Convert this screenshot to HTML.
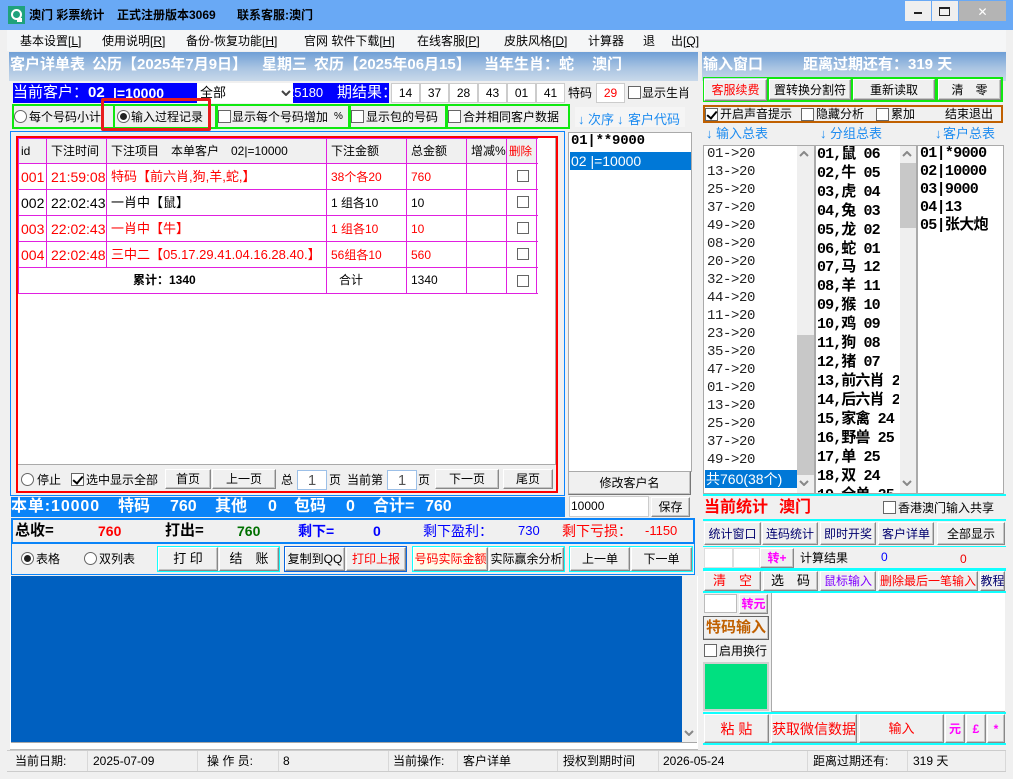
<!DOCTYPE html>
<html><head><meta charset="utf-8">
<style>
html,body{margin:0;padding:0}
body{width:1013px;height:779px;overflow:hidden;position:relative;background:#f0f0f0;font:12px/16px "Liberation Sans","Noto Sans CJK SC",sans-serif;color:#000}
div,span.a,svg{position:absolute;white-space:nowrap;box-sizing:border-box}
.t{height:16px;line-height:16px}
.b{background:#f0f0f0;border:1px solid;border-color:#fff #888 #888 #fff;box-shadow:inset -1px -1px 0 #c4c4c4;display:flex;align-items:center;justify-content:center}
.w{background:#fff;border:1px solid #aaa}
.cb{width:13px;height:13px;background:#fff;border:1px solid #666}
.r{width:13px;height:13px;background:#fff;border:1px solid #666;border-radius:50%}
.r.on:after{content:"";position:absolute;left:2px;top:2px;width:7px;height:7px;border-radius:50%;background:#222}
.cb.on:after{content:"";position:absolute;left:3px;top:0;width:4px;height:8px;border:solid #000;border-width:0 2px 2px 0;transform:rotate(40deg)}
.hd{background:linear-gradient(#6f9fd6,#a9c4e2 55%,#c9d9ea);color:#fff;font-weight:bold;font-size:15px;line-height:26px}
.g{border:2px solid #10e810}
.c{border:2px solid #1ff}
.l{font:14px/18px "Liberation Mono","Noto Sans CJK SC",monospace;left:707px;letter-spacing:-.4px;color:#222;margin-top:-1px}
.m{font:bold 15px/19px "Liberation Mono","Noto Sans CJK SC",monospace;left:817px;letter-spacing:-.9px;margin-top:1px}
.n{font:bold 15px/18px "Liberation Mono","Noto Sans CJK SC",monospace;left:920px;letter-spacing:-.7px;margin-top:1px}
.v{background:#e020e0}
.s{font-size:14px}
.wb{color:#fff;font-weight:bold;font-size:16px;line-height:20px;top:497px}
.st{font-size:14px;top:522px;height:18px;line-height:18px}
.blue{color:#1e8cf0;font-size:13px}
.nv{color:#00006e;font-size:12px}
.sep{width:1px;height:20px;top:751px;background:#d8d8d8}
polyline{fill:none;stroke:#888;stroke-width:2}
</style></head><body>

<!-- title bar -->
<div style="left:0;top:0;width:1013px;height:30px;background:#69a9f5"></div>
<div style="left:8px;top:6px;width:17px;height:18px;background:#1fa27c"></div>
<div style="left:11px;top:9px;width:11px;height:11px;border:2px solid #fff;border-radius:50%"></div>
<div style="left:17px;top:18px;width:5px;height:4px;background:#fff"></div>
<div class="t" style="left:29px;top:7px;font-weight:bold">澳门 彩票统计</div>
<div class="t" style="left:117px;top:7px;font-weight:bold">正式注册版本3069</div>
<div class="t" style="left:237px;top:7px;font-weight:bold">联系客服:澳门</div>
<div style="left:905px;top:1px;width:26px;height:20px;background:#efefef"></div>
<div style="left:914px;top:12px;width:8px;height:2px;background:#222"></div>
<div style="left:932px;top:1px;width:26px;height:20px;background:#efefef"></div>
<div style="left:939px;top:7px;width:11px;height:9px;border:1px solid #222;border-top-width:2px"></div>
<div style="left:959px;top:1px;width:47px;height:20px;background:#b4b4b4;color:#fff;text-align:center;font-size:12px;line-height:22px">✕</div>

<!-- menu -->
<div style="left:7px;top:30px;width:999px;height:21px;background:#f5f6f7"></div>
<div class="t" style="left:20px;top:33px">基本设置[<u>L</u>]</div>
<div class="t" style="left:102px;top:33px">使用说明[<u>R</u>]</div>
<div class="t" style="left:186px;top:33px">备份-恢复功能[<u>H</u>]</div>
<div class="t" style="left:304px;top:33px">官网 软件下载[<u>H</u>]</div>
<div class="t" style="left:417px;top:33px">在线客服[<u>P</u>]</div>
<div class="t" style="left:504px;top:33px">皮肤风格[<u>D</u>]</div>
<div class="t" style="left:588px;top:33px">计算器</div>
<div class="t" style="left:643px;top:33px">退</div>
<div class="t" style="left:671px;top:33px">出[<u>Q</u>]</div>

<!-- headers -->
<div class="hd" style="left:9px;top:52px;width:689px;height:29px"><span style="position:absolute;left:1px;top:0">客户详单表</span><span style="position:absolute;left:83px;top:0">公历【2025年7月9日】</span><span style="position:absolute;left:253px;top:0">星期三</span><span style="position:absolute;left:305px;top:0">农历【2025年06月15】</span><span style="position:absolute;left:475px;top:0">当年生肖：蛇</span><span style="position:absolute;left:583px;top:0">澳门</span></div>
<div class="hd" style="left:702px;top:52px;width:304px;height:29px"><span style="position:absolute;left:1px;top:0">输入窗口</span><span style="position:absolute;left:101px;top:0">距离过期还有：319 天</span></div>

<!-- row 1 -->
<div style="left:13px;top:83px;width:184px;height:20px;background:#00f;color:#fff;font-size:15px;line-height:20px"><span style="position:absolute;left:0;top:0">当前客户：</span><span style="position:absolute;left:75px;top:0;font-weight:bold">02</span><span style="position:absolute;left:100px;top:0;font-weight:bold;font-size:14px">|=10000</span></div>
<div style="left:197px;top:83px;width:96px;height:20px;background:#fff;font-size:13px;line-height:19px;padding-left:3px">全部</div>
<svg style="left:281px;top:90px" width="10" height="6"><polyline points="1,1 5,5 9,1" style="stroke:#444"/></svg>
<div style="left:293px;top:83px;width:96px;height:20px;background:#00f;color:#fff;font-size:13px;line-height:20px;overflow:hidden"><span style="position:absolute;left:-6px;top:0">25180</span><span style="position:absolute;left:44px;top:0;font-size:15px">期结果：</span></div>
<div class="w" style="left:391px;top:83px;width:29px;height:20px;border-color:#ccc;text-align:center;line-height:19px">14</div>
<div class="w" style="left:420px;top:83px;width:29px;height:20px;border-color:#ccc;text-align:center;line-height:19px">37</div>
<div class="w" style="left:449px;top:83px;width:29px;height:20px;border-color:#ccc;text-align:center;line-height:19px">28</div>
<div class="w" style="left:478px;top:83px;width:29px;height:20px;border-color:#ccc;text-align:center;line-height:19px">43</div>
<div class="w" style="left:507px;top:83px;width:29px;height:20px;border-color:#ccc;text-align:center;line-height:19px">01</div>
<div class="w" style="left:536px;top:83px;width:29px;height:20px;border-color:#ccc;text-align:center;line-height:19px">41</div>
<div class="t" style="left:568px;top:85px">特码</div>
<div class="w" style="left:596px;top:83px;width:29px;height:20px;border-color:#ccc;text-align:center;line-height:19px;color:#f00">29</div>
<div class="cb" style="left:628px;top:86px"></div>
<div class="t" style="left:642px;top:85px">显示生肖</div>

<!-- row 2 -->
<div class="g" style="left:12px;top:104px;width:102px;height:25px;border-right:0"></div>
<div class="g" style="left:113px;top:104px;width:104px;height:25px"></div>
<div class="g" style="left:216px;top:104px;width:134px;height:25px"></div>
<div class="g" style="left:349px;top:104px;width:98px;height:25px"></div>
<div class="g" style="left:446px;top:104px;width:124px;height:25px"></div>
<div class="r" style="left:14px;top:110px"></div><div class="t" style="left:29px;top:109px">每个号码小计</div>
<div class="r on" style="left:117px;top:110px"></div><div class="t" style="left:131px;top:109px">输入过程记录</div>
<div class="cb" style="left:218px;top:110px"></div><div class="t" style="left:232px;top:109px">显示每个号码增加</div><div class="t" style="left:334px;top:109px;font-size:10px">%</div>
<div class="cb" style="left:351px;top:110px"></div><div class="t" style="left:366px;top:109px">显示包的号码</div>
<div class="cb" style="left:448px;top:110px"></div><div class="t" style="left:463px;top:109px">合并相同客户数据</div>
<div style="left:101px;top:98px;width:110px;height:33px;border:3px solid #e81c1c;border-radius:2px"></div>

<div style="left:575px;top:107px;width:110px;height:20px;background:#f5f5f5"></div>
<div class="t blue" style="left:578px;top:112px">↓</div><div class="t blue" style="left:588px;top:112px">次序</div><div class="t blue" style="left:617px;top:112px">↓</div><div class="t blue" style="left:628px;top:112px">客户代码</div>

<!-- main frames -->
<div style="left:10px;top:131px;width:555px;height:365px;border:1px solid #0a84ff;background:#f0f0f0"></div>
<div style="left:16px;top:136px;width:542px;height:357px;border:2px solid #f00;background:#f0f0f0"></div>
<div style="left:18px;top:138px;width:538px;height:327px;background:#fff;border-right:1px solid #aaa;border-bottom:1px solid #aaa"></div>

<!-- table -->
<div style="left:18px;top:138px;width:519px;height:25px;background:#f0f0f0"></div>
<div class="v" style="left:18px;top:138px;width:520px;height:1px"></div>
<div class="v" style="left:18px;top:163px;width:520px;height:1px"></div>
<div class="v" style="left:18px;top:189px;width:520px;height:1px"></div>
<div class="v" style="left:18px;top:215px;width:520px;height:1px"></div>
<div class="v" style="left:18px;top:241px;width:520px;height:1px"></div>
<div class="v" style="left:18px;top:267px;width:520px;height:1px"></div>
<div class="v" style="left:18px;top:293px;width:520px;height:1px"></div>
<div class="v" style="left:18px;top:138px;width:1px;height:156px"></div>
<div class="v" style="left:46px;top:138px;width:1px;height:129px"></div>
<div class="v" style="left:106px;top:138px;width:1px;height:129px"></div>
<div class="v" style="left:326px;top:138px;width:1px;height:156px"></div>
<div class="v" style="left:406px;top:138px;width:1px;height:156px"></div>
<div class="v" style="left:466px;top:138px;width:1px;height:156px"></div>
<div class="v" style="left:506px;top:138px;width:1px;height:156px"></div>
<div class="v" style="left:536px;top:138px;width:1px;height:156px"></div>

<div class="t" style="left:21px;top:143px">id</div>
<div class="t" style="left:51px;top:143px">下注时间</div>
<div class="t" style="left:111px;top:143px">下注项目</div>
<div class="t" style="left:171px;top:143px">本单客户</div>
<div class="t" style="left:231px;top:143px">02|=10000</div>
<div class="t" style="left:331px;top:143px">下注金额</div>
<div class="t" style="left:411px;top:143px">总金额</div>
<div class="t" style="left:471px;top:143px">增减%</div>
<div class="t" style="left:509px;top:144px;color:#f00;font-size:11.5px">删除</div>

<div class="t s" style="left:21px;top:169px;color:#f00">001</div>
<div class="t s" style="left:51px;top:169px;color:#f00">21:59:08</div>
<div class="t" style="left:111px;top:169px;color:#f00;font-size:13px">特码【前六肖,狗,羊,蛇,】</div>
<div class="t" style="left:331px;top:169px;color:#f00">38个各20</div>
<div class="t" style="left:411px;top:169px;color:#f00">760</div>
<div class="t s" style="left:21px;top:195px">002</div>
<div class="t s" style="left:51px;top:195px">22:02:43</div>
<div class="t" style="left:111px;top:195px;font-size:13px">一肖中【鼠】</div>
<div class="t" style="left:331px;top:195px">1 组各10</div>
<div class="t" style="left:411px;top:195px">10</div>
<div class="t s" style="left:21px;top:221px;color:#f00">003</div>
<div class="t s" style="left:51px;top:221px;color:#f00">22:02:43</div>
<div class="t" style="left:111px;top:221px;color:#f00;font-size:13px">一肖中【牛】</div>
<div class="t" style="left:331px;top:221px;color:#f00">1 组各10</div>
<div class="t" style="left:411px;top:221px;color:#f00">10</div>
<div class="t s" style="left:21px;top:247px;color:#f00">004</div>
<div class="t s" style="left:51px;top:247px;color:#f00">22:02:48</div>
<div class="t" style="left:111px;top:247px;color:#f00;font-size:13px;width:215px;overflow:hidden">三中二【05.17.29.41.04.16.28.40.】</div>
<div class="t" style="left:331px;top:247px;color:#f00">56组各10</div>
<div class="t" style="left:411px;top:247px;color:#f00">560</div>
<div class="t" style="left:133px;top:272px;font-weight:bold">累计：1340</div>
<div class="t" style="left:339px;top:272px">合计</div>
<div class="t" style="left:411px;top:272px">1340</div>
<div class="cb" style="left:517px;top:170px;width:12px;height:12px"></div>
<div class="cb" style="left:517px;top:196px;width:12px;height:12px"></div>
<div class="cb" style="left:517px;top:222px;width:12px;height:12px"></div>
<div class="cb" style="left:517px;top:248px;width:12px;height:12px"></div>
<div class="cb" style="left:517px;top:275px;width:12px;height:12px"></div>

<!-- pager -->
<div class="r" style="left:21px;top:473px"></div><div class="t" style="left:37px;top:472px">停止</div>
<div class="cb on" style="left:71px;top:473px"></div><div class="t" style="left:86px;top:472px">选中显示全部</div>
<div class="b" style="left:165px;top:469px;width:46px;height:20px">首页</div>
<div class="b" style="left:212px;top:469px;width:64px;height:20px">上一页</div>
<div class="t" style="left:281px;top:472px">总</div>
<div class="w" style="left:297px;top:470px;width:30px;height:20px;border-color:#9cc0e8;text-align:center;font-size:15px;line-height:20px;color:#555">1</div>
<div class="t" style="left:329px;top:472px">页</div>
<div class="t" style="left:347px;top:472px">当前第</div>
<div class="w" style="left:387px;top:470px;width:30px;height:20px;border-color:#9cc0e8;text-align:center;font-size:15px;line-height:20px;color:#555">1</div>
<div class="t" style="left:418px;top:472px">页</div>
<div class="b" style="left:435px;top:469px;width:64px;height:20px">下一页</div>
<div class="b" style="left:503px;top:469px;width:50px;height:20px">尾页</div>

<!-- customer list -->
<div class="w" style="left:568px;top:132px;width:124px;height:340px"></div>
<div style="left:571px;top:132px;font:bold 14px/19px 'Liberation Mono','Noto Sans CJK SC',monospace;letter-spacing:-.2px">01|**9000</div>
<div style="left:570px;top:152px;width:121px;height:18px;background:#0078d7;color:#fff;font:14px/18px 'Liberation Sans','Noto Sans CJK SC',sans-serif;padding-left:1px">02 |=10000</div>
<div class="b" style="left:568px;top:471px;width:123px;height:24px;border-color:#aaa #777 #777 #aaa">修改客户名</div>
<div class="w" style="left:569px;top:496px;width:80px;height:21px;border-color:#ccc;line-height:19px;padding-left:1px">10000</div>
<div class="b" style="left:651px;top:497px;width:39px;height:20px">保存</div>

<!-- blue bar -->
<div style="left:11px;top:497px;width:554px;height:20px;background:#0a84f8"></div>
<div class="wb" style="left:11px;letter-spacing:.9px">本单:10000</div>
<div class="wb" style="left:118px">特码</div>
<div class="wb" style="left:170px">760</div>
<div class="wb" style="left:215px">其他</div>
<div class="wb" style="left:268px">0</div>
<div class="wb" style="left:294px">包码</div>
<div class="wb" style="left:346px">0</div>
<div class="wb" style="left:373px">合计=</div>
<div class="wb" style="left:425px">760</div>

<!-- stats -->
<div style="left:11px;top:518px;width:684px;height:26px;border:2px solid #0a84f8"></div>
<div class="st" style="left:15px;font-weight:bold;font-size:15px">总收=</div>
<div class="st" style="left:98px;font-weight:bold;color:#f00">760</div>
<div class="st" style="left:165px;font-weight:bold;font-size:15px">打出=</div>
<div class="st" style="left:237px;font-weight:bold;color:#007000">760</div>
<div class="st" style="left:298px;font-weight:bold;color:#00f">剩下=</div>
<div class="st" style="left:373px;font-weight:bold;color:#00f">0</div>
<div class="st" style="left:423px;color:#00f">剩下盈利：</div>
<div class="st" style="left:518px;color:#00f;font-size:13px">730</div>
<div class="st" style="left:562px;color:#f00">剩下亏损：</div>
<div class="st" style="left:645px;color:#f00;font-size:13px">-1150</div>

<div style="left:11px;top:543px;width:684px;height:32px;border:1px solid #0a84f8"></div>
<div class="r on" style="left:21px;top:552px"></div><div class="t" style="left:36px;top:551px">表格</div>
<div class="r" style="left:84px;top:552px"></div><div class="t" style="left:99px;top:551px">双列表</div>
<div style="left:157px;top:546px;width:123px;height:26px;border:1px solid #1ff"></div>
<div class="b" style="left:158px;top:547px;width:60px;height:24px;font-size:13px">打 印</div>
<div class="b" style="left:219px;top:547px;width:60px;height:24px;font-size:13px">结　账</div>
<div style="left:284px;top:546px;width:123px;height:26px;border:1px solid #0a66e0"></div>
<div class="b" style="left:285px;top:547px;width:60px;height:24px">复制到QQ</div>
<div class="b" style="left:346px;top:547px;width:60px;height:24px;color:#f00">打印上报</div>
<div style="left:412px;top:546px;width:153px;height:26px;border:1px solid #1ff"></div>
<div class="b" style="left:413px;top:547px;width:75px;height:24px;color:#f00;background:#fffbe8">号码实际金额</div>
<div class="b" style="left:489px;top:547px;width:75px;height:24px">实际赢余分析</div>
<div style="left:569px;top:546px;width:124px;height:26px;border:1px solid #1ff"></div>
<div class="b" style="left:570px;top:547px;width:60px;height:24px">上一单</div>
<div class="b" style="left:631px;top:547px;width:61px;height:24px">下一单</div>

<!-- blue panel -->
<div style="left:10px;top:576px;width:688px;height:174px;background:#fff;border-bottom:1px solid #bbb"></div>
<div style="left:682px;top:576px;width:15px;height:166px;background:#f0f0f0"></div>
<div style="left:11px;top:576px;width:671px;height:166px;background:#0060c0"></div>
<div style="left:11px;top:742px;width:686px;height:1px;background:#a8a8a8"></div>
<svg style="left:684px;top:730px" width="10" height="6"><polyline points="1,1 5,5 9,1"/></svg>

<!-- status -->
<div style="left:7px;top:750px;width:999px;height:1px;background:#ccc"></div>
<div style="left:7px;top:771px;width:999px;height:1px;background:#ccc"></div>
<div class="t" style="left:15px;top:753px">当前日期:</div><div class="t" style="left:93px;top:753px">2025-07-09</div>
<div class="t" style="left:207px;top:753px">操 作 员:</div><div class="t" style="left:283px;top:753px">8</div>
<div class="t" style="left:393px;top:753px">当前操作:</div><div class="t" style="left:463px;top:753px">客户详单</div>
<div class="t" style="left:563px;top:753px">授权到期时间</div><div class="t" style="left:663px;top:753px">2026-05-24</div>
<div class="t" style="left:813px;top:753px">距离过期还有:</div><div class="t" style="left:913px;top:753px">319 天</div>
<div class="sep" style="left:87px"></div><div class="sep" style="left:197px"></div><div class="sep" style="left:278px"></div><div class="sep" style="left:388px"></div><div class="sep" style="left:457px"></div><div class="sep" style="left:557px"></div><div class="sep" style="left:658px"></div><div class="sep" style="left:807px"></div><div class="sep" style="left:907px"></div><div class="sep" style="left:1005px"></div>

<!-- right top -->
<div style="left:703px;top:77px;width:300px;height:25px;border:1px solid #10e810"></div>
<div class="b" style="left:704px;top:79px;width:63px;height:22px;color:#f00">客服续费</div>
<div class="g" style="left:767px;top:77px;width:85px;height:25px"></div>
<div class="b" style="left:769px;top:79px;width:82px;height:21px">置转换分割符</div>
<div class="g" style="left:851px;top:77px;width:85px;height:25px"></div>
<div class="b" style="left:853px;top:79px;width:82px;height:21px">重新读取</div>
<div class="g" style="left:936px;top:77px;width:67px;height:25px"></div>
<div class="b" style="left:938px;top:79px;width:63px;height:21px">清　零</div>

<div style="left:703px;top:105px;width:300px;height:18px;border:2px solid #c06000"></div>
<div class="cb on" style="left:705px;top:108px"></div><div class="t" style="left:720px;top:106px">开启声音提示</div>
<div class="cb" style="left:801px;top:108px"></div><div class="t" style="left:816px;top:106px">隐藏分析</div>
<div class="cb" style="left:876px;top:108px"></div><div class="t" style="left:891px;top:106px">累加</div>
<div class="t" style="left:945px;top:106px">结束退出</div>

<div class="t blue" style="left:706px;top:126px">↓</div><div class="t blue" style="left:716px;top:126px">输入总表</div>
<div class="t blue" style="left:820px;top:126px">↓</div><div class="t blue" style="left:830px;top:126px">分组总表</div>
<div class="t blue" style="left:935px;top:126px">↓</div><div class="t blue" style="left:943px;top:126px">客户总表</div>

<!-- lists -->
<div class="w" style="left:703px;top:145px;width:301px;height:349px;border-color:#aaa;overflow:hidden"></div>
<div style="left:814px;top:145px;width:2px;height:349px;background:#aaa"></div>
<div style="left:916px;top:145px;width:2px;height:349px;background:#aaa"></div>
<div style="left:797px;top:146px;width:17px;height:347px;background:#efefef"></div>
<div style="left:797px;top:335px;width:17px;height:140px;background:#c8c8c8"></div>
<svg style="left:799px;top:151px" width="10" height="6"><polyline points="1,5 5,1 9,5"/></svg>
<svg style="left:799px;top:480px" width="10" height="6"><polyline points="1,1 5,5 9,1"/></svg>
<div style="left:900px;top:146px;width:16px;height:347px;background:#efefef"></div>
<div style="left:900px;top:163px;width:16px;height:65px;background:#c8c8c8"></div>
<svg style="left:902px;top:151px" width="10" height="6"><polyline points="1,5 5,1 9,5"/></svg>
<svg style="left:902px;top:480px" width="10" height="6"><polyline points="1,1 5,5 9,1"/></svg>

<div class="l" style="top:146px">01-&gt;20</div><div class="l" style="top:164px">13-&gt;20</div><div class="l" style="top:182px">25-&gt;20</div><div class="l" style="top:200px">37-&gt;20</div><div class="l" style="top:218px">49-&gt;20</div><div class="l" style="top:236px">08-&gt;20</div><div class="l" style="top:254px">20-&gt;20</div><div class="l" style="top:272px">32-&gt;20</div><div class="l" style="top:290px">44-&gt;20</div><div class="l" style="top:308px">11-&gt;20</div><div class="l" style="top:326px">23-&gt;20</div><div class="l" style="top:344px">35-&gt;20</div><div class="l" style="top:362px">47-&gt;20</div><div class="l" style="top:380px">01-&gt;20</div><div class="l" style="top:398px">13-&gt;20</div><div class="l" style="top:416px">25-&gt;20</div><div class="l" style="top:434px">37-&gt;20</div><div class="l" style="top:452px">49-&gt;20</div>
<div style="left:705px;top:470px;width:92px;height:18px;background:#0078d7;color:#fff;font:14px/18px 'Liberation Sans','Noto Sans CJK SC',sans-serif;padding-left:1px">共760(38个)</div>

<div class="m" style="top:144px">01,鼠 06</div><div class="m" style="top:163px">02,牛 05</div><div class="m" style="top:182px">03,虎 04</div><div class="m" style="top:201px">04,兔 03</div><div class="m" style="top:220px">05,龙 02</div><div class="m" style="top:239px">06,蛇 01</div><div class="m" style="top:257px">07,马 12</div><div class="m" style="top:276px">08,羊 11</div><div class="m" style="top:295px">09,猴 10</div><div class="m" style="top:314px">10,鸡 09</div><div class="m" style="top:333px">11,狗 08</div><div class="m" style="top:352px">12,猪 07</div><div class="m" style="top:371px;width:82px;overflow:hidden">13,前六肖 24</div><div class="m" style="top:390px;width:82px;overflow:hidden">14,后六肖 25</div><div class="m" style="top:409px">15,家禽 24</div><div class="m" style="top:428px">16,野兽 25</div><div class="m" style="top:447px">17,单 25</div><div class="m" style="top:466px">18,双 24</div><div class="m" style="top:485px;height:7px;overflow:hidden">19,全单 25</div>

<div class="n" style="top:144px">01|*9000</div><div class="n" style="top:162px">02|10000</div><div class="n" style="top:180px">03|9000</div><div class="n" style="top:198px">04|13</div><div class="n" style="top:216px">05|张大炮</div>

<!-- current stats -->
<div style="left:703px;top:494px;width:303px;height:2px;background:#1ff"></div>
<div style="left:703px;top:519px;width:303px;height:2px;background:#1ff"></div>
<div style="left:704px;top:497px;color:#f00;font-weight:bold;font-size:16px;line-height:22px">当前统计</div>
<div style="left:779px;top:497px;color:#f00;font-weight:bold;font-size:16px;line-height:22px">澳门</div>
<div class="cb" style="left:883px;top:501px"></div><div class="t" style="left:898px;top:500px">香港澳门输入共享</div>

<div class="b nv" style="left:704px;top:522px;width:57px;height:23px">统计窗口</div>
<div class="b nv" style="left:762px;top:522px;width:56px;height:23px">连码统计</div>
<div class="b nv" style="left:820px;top:522px;width:56px;height:23px">即时开奖</div>
<div class="b nv" style="left:878px;top:522px;width:56px;height:23px">客户详单</div>
<div class="b" style="left:937px;top:522px;width:68px;height:23px">全部显示</div>
<div style="left:703px;top:546px;width:303px;height:1px;background:#1ff"></div>

<div style="left:704px;top:548px;width:29px;height:20px;background:#fff;border:1px solid #ddd"></div>
<div style="left:733px;top:548px;width:27px;height:20px;background:#fff;border:1px solid #ddd"></div>
<div class="b" style="left:760px;top:548px;width:34px;height:20px;color:#f0f;font-weight:bold">转+</div>
<div class="t" style="left:800px;top:550px">计算结果</div>
<div class="t" style="left:881px;top:549px;color:#00f">0</div>
<div class="t" style="left:960px;top:551px;color:#e00">0</div>
<div style="left:703px;top:568px;width:303px;height:3px;background:#1ff"></div>

<div class="b" style="left:704px;top:571px;width:57px;height:20px;color:#f00;font-size:13px">清　空</div>
<div class="b" style="left:763px;top:571px;width:55px;height:20px;font-size:13px">选　码</div>
<div class="b" style="left:820px;top:571px;width:56px;height:20px;color:#8000ff">鼠标输入</div>
<div class="b" style="left:878px;top:571px;width:100px;height:20px;color:#f00">删除最后一笔输入</div>
<div class="b nv" style="left:980px;top:571px;width:25px;height:20px;overflow:hidden">教程</div>
<div style="left:703px;top:591px;width:303px;height:2px;background:#1ff"></div>

<div class="w" style="left:704px;top:594px;width:33px;height:19px;border-color:#bbb"></div>
<div class="b" style="left:739px;top:594px;width:29px;height:20px;color:#f0f;font-weight:bold">转元</div>
<div class="b" style="left:703px;top:616px;width:66px;height:24px;color:#c06000;font-weight:bold;font-size:15px;border:1px solid #666">特码输入</div>
<div class="cb" style="left:704px;top:644px"></div><div class="t" style="left:719px;top:643px">启用换行</div>
<div style="left:703px;top:662px;width:66px;height:49px;background:#00e080;border:2px solid #d0d0d0"></div>
<div class="w" style="left:771px;top:593px;width:234px;height:119px;border-width:0 0 1px 1px;border-color:#aaa"></div>

<div style="left:703px;top:712px;width:303px;height:2px;background:#1ff"></div>
<div style="left:703px;top:743px;width:303px;height:2px;background:#1ff"></div>
<div class="b" style="left:704px;top:714px;width:65px;height:29px;color:#f00;font-size:14px">粘 贴</div>
<div class="b" style="left:771px;top:714px;width:86px;height:29px;color:#f00;font-size:14px">获取微信数据</div>
<div class="b" style="left:859px;top:714px;width:85px;height:29px;color:#f00;font-size:13px">输入</div>
<div class="b" style="left:945px;top:714px;width:20px;height:29px;color:#f0f;font-weight:bold">元</div>
<div class="b" style="left:966px;top:714px;width:20px;height:29px;color:#f0f;font-weight:bold">£</div>
<div class="b" style="left:987px;top:714px;width:18px;height:29px;color:#f0f;font-weight:bold">*</div>

</body></html>
